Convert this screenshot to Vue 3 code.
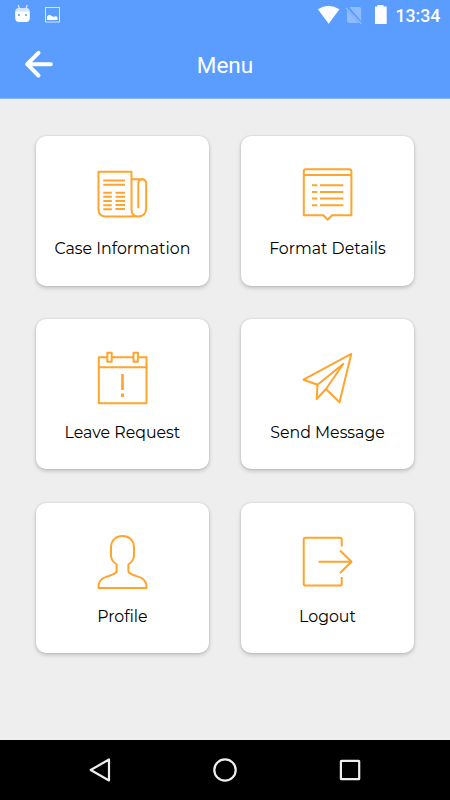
<template>
  <div class="screen">
    <header class="header">
      <div class="status-bar">
        <svg class="notifications" width="62" height="30" viewBox="0 0 62 30">
          <path d="M18.200 5l1.200 3.500M27.200 5L26 8.500" stroke="#d5e5ff" stroke-width="1.200" />
          <path d="M15.300 11.500q0-3.500 3.200-3.500h8q3.200 0 3.200 3.500z" fill="#d5e5ff" />
          <path d="M15.200 11.300h14.600v6.700q0 4-4 4h-6.600q-4 0-4-4z" fill="#fff" />
          <path d="M18 14h2v2h-2zM25 14h2v2h-2z" fill="#7fb3ff" />
          <rect x="45.500" y="7.500" width="14" height="14.500" fill="none" stroke="#d5e5ff" />
          <path d="M47 20v-3.500q2-2.500 4.500-.7 1.500 1.500 3 .8 2-.9 3 .9V20z" fill="#fff" />
        </svg>
        <svg class="signals" width="75" height="30" viewBox="0 0 75 30">
          <path d="M2.800 9.300Q13.500 2 24.500 9.300L13.700 23.800z" fill="#fff" />
          <path d="M32.800 10.500l12.200 12.500H35q-2.200 0-2.200-2.200zM35.500 7.500l1-.5h8.500q2 0 2 2v12z" fill="#8fbbff" transform="translate(-.8 0)" />
          <path d="M31 8l15.500 16" stroke="#8fbbff" stroke-width="1.300" />
          <path d="M60 6.500h2.500V5h6v1.500h3.200V24H60z" fill="#fff" />
        </svg>
        <span class="clock">13:34</span>
      </div>
      <div class="title-bar">
        <button class="back" aria-label="Back">
          <svg width="30" height="30" viewBox="0 0 30 30">
            <path d="M15.500 3.900L4.200 15.200l11.300 11.300M4.200 15.200h23.600" />
          </svg>
        </button>
        <h1 class="title">Menu</h1>
      </div>
    </header>

    <main class="menu">
      <button v-for="item in items" :key="item.id" class="card">
        <svg class="icon" width="75" height="65" viewBox="0 0 75 65">
          <path v-for="(d, i) in item.paths" :key="i" :d="d" />
        </svg>
        <span class="label">{{ item.title }}</span>
      </button>
    </main>

    <nav class="nav-bar">
      <svg width="30" height="30" viewBox="0 0 30 30">
        <path d="M24 4.500v21L5.700 15z" />
      </svg>
      <svg width="30" height="30" viewBox="0 0 30 30">
        <circle cx="15" cy="15" r="10.700" />
      </svg>
      <svg width="30" height="30" viewBox="0 0 30 30">
        <rect x="5.900" y="5.900" width="18.300" height="18.300" rx=".5" />
      </svg>
    </nav>
  </div>
</template>

<script setup>
const items = [
  {
    id: 'case',
    title: 'Case Information',
    paths: [
      'M52.500 56.500H20q-6.500-.5-6.500-7V11.700h33V50q.5 6 6 6.500 8.500 0 8.700-8V23.500q-.2-4.300-4.400-4.300H47',
      'M58 19.300q-4.700-.3-4.700 4.700V48.300',
      'M18.300 20.500H40M18.300 24.700H40',
      'M18.300 32.700h8.500M18.300 36.800h8.500M18.300 41h8.500M18.300 45.200h8.500M18.300 49.300h8.500',
      'M30.500 32.700H40M30.500 36.800H40M30.500 41H40M30.500 45H40M30.500 49H40'
    ]
  },
  {
    id: 'format',
    title: 'Format Details',
    paths: [
      'M13.800 55.300V11.500q0-2.300 2.300-2.300h43q2.300 0 2.300 2.300v43.800H42l-4.300 4.500-4.300-4.500z',
      'M14 15h47.500',
      'M22 25.200h5.300M22 31.900h5.300M22 38.600h5.300M22 45.300h5.300',
      'M30 25.200h23.300M30 31.900h23.300M30 38.600h23.300M30 45.300h23.300'
    ]
  },
  {
    id: 'leave',
    title: 'Leave Request',
    paths: [
      'M22 13.300h-8.200v45.900h47.700V13.300h-8.200M27 13.300h21',
      'M14 23.200h47.500',
      'M22.300 8.800h4.400v9h-4.400zM48.500 8.800h4.400v9h-4.400z',
      'M37.200 30v16M37.800 30v16M36 50.400h3M36 52h3'
    ]
  },
  {
    id: 'send',
    title: 'Send Message',
    paths: [
      'M13.500 35.700L61.300 9.800 49.500 58.200 36 45 26.700 55l.8-14.300z',
      'M27.500 40.700L53.400 19.800 36 45'
    ]
  },
  {
    id: 'profile',
    title: 'Profile',
    paths: [
      'M13.500 59.900c-.2-7.500 3.500-9.800 10.500-12 5.500-2 7.600-2.700 7.600-5V36.500c-3-2.200-5.400-4.500-5.600-8.500v-9C26.300 12 31 8 37.500 8s11.200 4 11.500 11v9c-.2 4-2.600 6.300-5.600 8.500v6.400c0 2.300 2.100 3 7.600 5 7 2.200 10.700 4.500 10.500 12z'
    ]
  },
  {
    id: 'logout',
    title: 'Logout',
    paths: [
      'M51.700 18.500V11.500q0-1.800-1.800-1.800H15.500q-1.800 0-1.800 1.800v44.300q0 1.800 1.800 1.800h34.400q1.800 0 1.800-1.800V49',
      'M28.500 33.700h32.800M50 22.500l11.500 11.200L50 45'
    ]
  }
]
</script>

<style>
body {
  background: #eee;
}
</style>

<style scoped>
.screen {
  width: 450px;
  height: 800px;
  display: flex;
  flex-direction: column;
  background: #eee;
  overflow: hidden;
}

button {
  border: none;
  padding: 0;
  font: inherit;
  color: inherit;
  cursor: pointer;
}

svg {
  display: block;
  flex: none;
}

/* Header */
.header {
  height: 98px;
  flex: none;
  background: #5a9dff;
  border-bottom: 1px solid #8ab7fb;
  color: #fff;
  font-family: Roboto, sans-serif;
}

.status-bar {
  height: 30px;
  display: flex;
  align-items: center;
}

.signals {
  margin-left: 253px;
}

.clock {
  margin-left: 5.500px;
  padding-top: 2px;
  font-size: 17.700px;
  font-weight: 500;
  line-height: 30px;
}

.title-bar {
  height: 68px;
  display: grid;
  grid-template-columns: 60px 1fr 60px;
  align-items: center;
}

.back {
  margin-left: 23px;
  width: 30px;
  background: none;
}

.back path {
  fill: none;
  stroke: #fff;
  stroke-width: 4;
  stroke-linecap: round;
  stroke-linejoin: round;
}

.title {
  margin: 2px 0 0;
  text-align: center;
  font-size: 22.500px;
  font-weight: 400;
  line-height: 30px;
}

/* Menu grid */
.menu {
  flex: 1;
  display: grid;
  grid-template-columns: 173.800px 173.800px;
  grid-auto-rows: 150px;
  align-content: start;
  gap: 33.700px 31.300px;
  padding: 36.800px 0 0 35.500px;
}

.card {
  display: flex;
  flex-direction: column;
  align-items: center;
  padding-top: 24.400px;
  background: #fff;
  border-radius: 10px;
  box-shadow: 0 2px 4px rgba(0, 0, 0, 0.2), 0 0 2px rgba(0, 0, 0, 0.14);
}

.icon path {
  fill: none;
  stroke: #ffa42c;
  stroke-width: 2;
  stroke-linejoin: round;
}

.label {
  margin-top: 12.200px;
  font-family: Montserrat, Inter, sans-serif;
  font-size: 15.800px;
  line-height: 24px;
  color: #000;
  white-space: nowrap;
}

/* Android navigation */
.nav-bar {
  height: 60px;
  flex: none;
  display: flex;
  align-items: center;
  justify-content: center;
  gap: 95px;
  background: #000;
}

.nav-bar svg {
  fill: none;
  stroke: #eee;
  stroke-width: 2.200;
  stroke-linejoin: round;
}
</style>
